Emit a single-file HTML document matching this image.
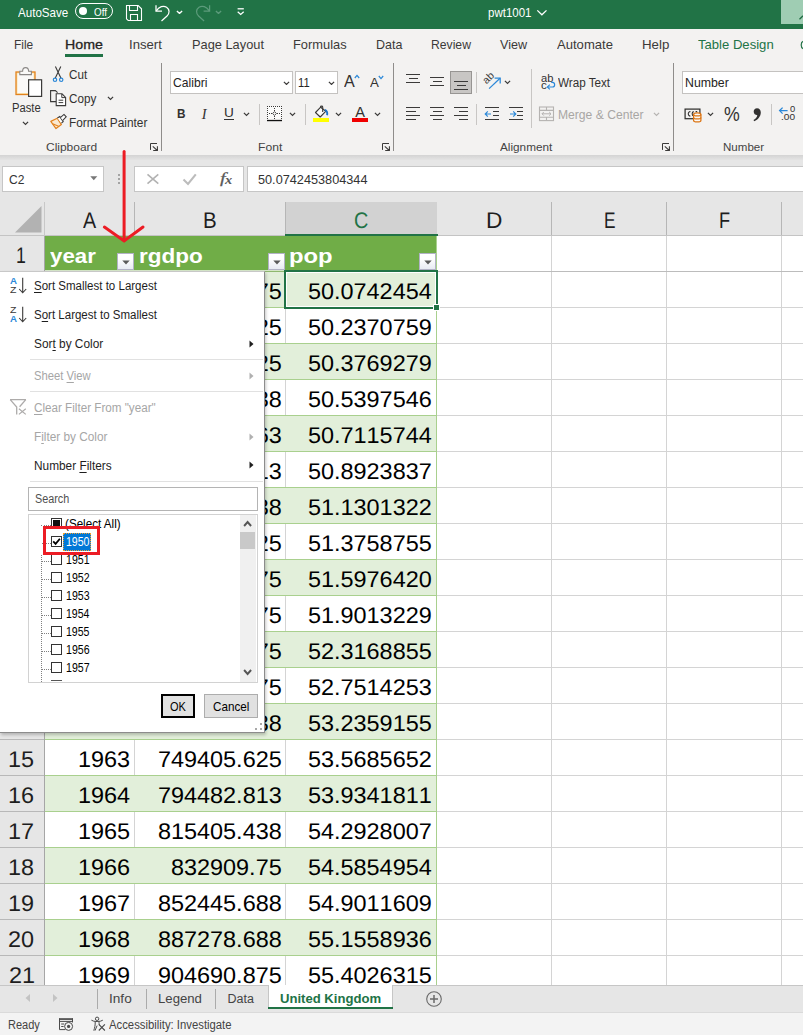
<!DOCTYPE html>
<html><head><meta charset="utf-8"><title>pwt1001 - Excel</title>
<style>
html,body{margin:0;padding:0;}
body{width:803px;height:1035px;position:relative;overflow:hidden;background:#fff;font-family:"Liberation Sans",sans-serif;}
#root{position:absolute;left:0;top:0;width:803px;height:1035px;overflow:hidden;}
#root div,#root span,#root svg{position:absolute;box-sizing:border-box;}
.t{white-space:nowrap;line-height:1;transform-origin:0 50%;}
u{text-decoration:underline;text-underline-offset:1.5px;}
</style></head><body><div id="root">
<div style="left:0px;top:0px;width:803px;height:29px;background:#217346;"></div>
<div style="left:781px;top:0px;width:22px;height:24px;background:#9fcdb3;"></div>
<div style="left:0px;top:29px;width:803px;height:126px;background:#f3f2f1;"></div>
<div style="left:0px;top:155px;width:803px;height:5px;background:linear-gradient(#d3d3d3,#e4e4e4);"></div>
<div style="left:0px;top:160px;width:803px;height:42px;background:#e6e6e6;"></div>
<div style="left:0px;top:202px;width:803px;height:783px;background:#fff;"></div>
<div style="left:0px;top:202px;width:803px;height:34px;background:#e6e6e6;"></div>
<div style="left:0px;top:236px;width:45px;height:749px;background:#e6e6e6;"></div>
<div style="left:134px;top:202px;width:1px;height:34px;background:#b6b6b6;"></div>
<div style="left:285px;top:202px;width:1px;height:34px;background:#b6b6b6;"></div>
<div style="left:436px;top:202px;width:1px;height:34px;background:#b6b6b6;"></div>
<div style="left:551px;top:202px;width:1px;height:34px;background:#b6b6b6;"></div>
<div style="left:666px;top:202px;width:1px;height:34px;background:#b6b6b6;"></div>
<div style="left:781px;top:202px;width:1px;height:34px;background:#b6b6b6;"></div>
<div style="left:0px;top:235px;width:803px;height:1px;background:#c4c4c4;"></div>
<div style="left:44px;top:236px;width:1px;height:749px;background:#a6a6a6;"></div>
<div style="left:286px;top:202px;width:151px;height:33px;background:#d2d2d2;"></div>
<div style="left:285px;top:234px;width:153px;height:2px;background:#217346;"></div>
<svg style="left:10px;top:203px;" width="34" height="32" viewBox="0 0 34 32"><path d="M31.5 3 L31.5 29.5 L5 29.5 Z" fill="#b2b2b2"/></svg>
<div style="left:44px;top:202px;width:1px;height:34px;background:#c8c8c8;"></div>
<div style="left:551px;top:236px;width:1px;height:749px;background:#d4d4d4;"></div>
<div style="left:666px;top:236px;width:1px;height:749px;background:#d4d4d4;"></div>
<div style="left:781px;top:236px;width:1px;height:749px;background:#d4d4d4;"></div>
<div style="left:437px;top:271px;width:366px;height:1px;background:#bcbcbc;"></div>
<div style="left:0px;top:271px;width:44px;height:1px;background:#b8b8b8;"></div>
<div style="left:437px;top:307px;width:366px;height:1px;background:#d4d4d4;"></div>
<div style="left:0px;top:307px;width:44px;height:1px;background:#b8b8b8;"></div>
<div style="left:437px;top:343px;width:366px;height:1px;background:#d4d4d4;"></div>
<div style="left:0px;top:343px;width:44px;height:1px;background:#b8b8b8;"></div>
<div style="left:437px;top:379px;width:366px;height:1px;background:#d4d4d4;"></div>
<div style="left:0px;top:379px;width:44px;height:1px;background:#b8b8b8;"></div>
<div style="left:437px;top:415px;width:366px;height:1px;background:#d4d4d4;"></div>
<div style="left:0px;top:415px;width:44px;height:1px;background:#b8b8b8;"></div>
<div style="left:437px;top:451px;width:366px;height:1px;background:#d4d4d4;"></div>
<div style="left:0px;top:451px;width:44px;height:1px;background:#b8b8b8;"></div>
<div style="left:437px;top:487px;width:366px;height:1px;background:#d4d4d4;"></div>
<div style="left:0px;top:487px;width:44px;height:1px;background:#b8b8b8;"></div>
<div style="left:437px;top:523px;width:366px;height:1px;background:#d4d4d4;"></div>
<div style="left:0px;top:523px;width:44px;height:1px;background:#b8b8b8;"></div>
<div style="left:437px;top:559px;width:366px;height:1px;background:#d4d4d4;"></div>
<div style="left:0px;top:559px;width:44px;height:1px;background:#b8b8b8;"></div>
<div style="left:437px;top:595px;width:366px;height:1px;background:#d4d4d4;"></div>
<div style="left:0px;top:595px;width:44px;height:1px;background:#b8b8b8;"></div>
<div style="left:437px;top:631px;width:366px;height:1px;background:#d4d4d4;"></div>
<div style="left:0px;top:631px;width:44px;height:1px;background:#b8b8b8;"></div>
<div style="left:437px;top:667px;width:366px;height:1px;background:#d4d4d4;"></div>
<div style="left:0px;top:667px;width:44px;height:1px;background:#b8b8b8;"></div>
<div style="left:437px;top:703px;width:366px;height:1px;background:#d4d4d4;"></div>
<div style="left:0px;top:703px;width:44px;height:1px;background:#b8b8b8;"></div>
<div style="left:437px;top:739px;width:366px;height:1px;background:#d4d4d4;"></div>
<div style="left:0px;top:739px;width:44px;height:1px;background:#b8b8b8;"></div>
<div style="left:437px;top:775px;width:366px;height:1px;background:#d4d4d4;"></div>
<div style="left:0px;top:775px;width:44px;height:1px;background:#b8b8b8;"></div>
<div style="left:437px;top:811px;width:366px;height:1px;background:#d4d4d4;"></div>
<div style="left:0px;top:811px;width:44px;height:1px;background:#b8b8b8;"></div>
<div style="left:437px;top:847px;width:366px;height:1px;background:#d4d4d4;"></div>
<div style="left:0px;top:847px;width:44px;height:1px;background:#b8b8b8;"></div>
<div style="left:437px;top:883px;width:366px;height:1px;background:#d4d4d4;"></div>
<div style="left:0px;top:883px;width:44px;height:1px;background:#b8b8b8;"></div>
<div style="left:437px;top:919px;width:366px;height:1px;background:#d4d4d4;"></div>
<div style="left:0px;top:919px;width:44px;height:1px;background:#b8b8b8;"></div>
<div style="left:437px;top:955px;width:366px;height:1px;background:#d4d4d4;"></div>
<div style="left:0px;top:955px;width:44px;height:1px;background:#b8b8b8;"></div>
<div style="left:437px;top:991px;width:366px;height:1px;background:#d4d4d4;"></div>
<div style="left:0px;top:991px;width:44px;height:1px;background:#b8b8b8;"></div>
<div style="left:45px;top:236px;width:392px;height:34px;background:#70ad47;"></div>
<div style="left:45px;top:270px;width:392px;height:1px;background:#d5e6c8;"></div>
<div style="left:45px;top:272px;width:392px;height:35px;background:#e2efda;"></div>
<div style="left:45px;top:271px;width:392px;height:1px;background:#a9d08e;"></div>
<div style="left:134px;top:308px;width:1px;height:35px;background:#d4d4d4;"></div>
<div style="left:285px;top:308px;width:1px;height:35px;background:#d4d4d4;"></div>
<div style="left:45px;top:307px;width:392px;height:1px;background:#a9d08e;"></div>
<div style="left:45px;top:344px;width:392px;height:35px;background:#e2efda;"></div>
<div style="left:45px;top:343px;width:392px;height:1px;background:#a9d08e;"></div>
<div style="left:134px;top:380px;width:1px;height:35px;background:#d4d4d4;"></div>
<div style="left:285px;top:380px;width:1px;height:35px;background:#d4d4d4;"></div>
<div style="left:45px;top:379px;width:392px;height:1px;background:#a9d08e;"></div>
<div style="left:45px;top:416px;width:392px;height:35px;background:#e2efda;"></div>
<div style="left:45px;top:415px;width:392px;height:1px;background:#a9d08e;"></div>
<div style="left:134px;top:452px;width:1px;height:35px;background:#d4d4d4;"></div>
<div style="left:285px;top:452px;width:1px;height:35px;background:#d4d4d4;"></div>
<div style="left:45px;top:451px;width:392px;height:1px;background:#a9d08e;"></div>
<div style="left:45px;top:488px;width:392px;height:35px;background:#e2efda;"></div>
<div style="left:45px;top:487px;width:392px;height:1px;background:#a9d08e;"></div>
<div style="left:134px;top:524px;width:1px;height:35px;background:#d4d4d4;"></div>
<div style="left:285px;top:524px;width:1px;height:35px;background:#d4d4d4;"></div>
<div style="left:45px;top:523px;width:392px;height:1px;background:#a9d08e;"></div>
<div style="left:45px;top:560px;width:392px;height:35px;background:#e2efda;"></div>
<div style="left:45px;top:559px;width:392px;height:1px;background:#a9d08e;"></div>
<div style="left:134px;top:596px;width:1px;height:35px;background:#d4d4d4;"></div>
<div style="left:285px;top:596px;width:1px;height:35px;background:#d4d4d4;"></div>
<div style="left:45px;top:595px;width:392px;height:1px;background:#a9d08e;"></div>
<div style="left:45px;top:632px;width:392px;height:35px;background:#e2efda;"></div>
<div style="left:45px;top:631px;width:392px;height:1px;background:#a9d08e;"></div>
<div style="left:134px;top:668px;width:1px;height:35px;background:#d4d4d4;"></div>
<div style="left:285px;top:668px;width:1px;height:35px;background:#d4d4d4;"></div>
<div style="left:45px;top:667px;width:392px;height:1px;background:#a9d08e;"></div>
<div style="left:45px;top:704px;width:392px;height:35px;background:#e2efda;"></div>
<div style="left:45px;top:703px;width:392px;height:1px;background:#a9d08e;"></div>
<div style="left:134px;top:740px;width:1px;height:35px;background:#d4d4d4;"></div>
<div style="left:285px;top:740px;width:1px;height:35px;background:#d4d4d4;"></div>
<div style="left:45px;top:739px;width:392px;height:1px;background:#a9d08e;"></div>
<div style="left:45px;top:776px;width:392px;height:35px;background:#e2efda;"></div>
<div style="left:45px;top:775px;width:392px;height:1px;background:#a9d08e;"></div>
<div style="left:134px;top:812px;width:1px;height:35px;background:#d4d4d4;"></div>
<div style="left:285px;top:812px;width:1px;height:35px;background:#d4d4d4;"></div>
<div style="left:45px;top:811px;width:392px;height:1px;background:#a9d08e;"></div>
<div style="left:45px;top:848px;width:392px;height:35px;background:#e2efda;"></div>
<div style="left:45px;top:847px;width:392px;height:1px;background:#a9d08e;"></div>
<div style="left:134px;top:884px;width:1px;height:35px;background:#d4d4d4;"></div>
<div style="left:285px;top:884px;width:1px;height:35px;background:#d4d4d4;"></div>
<div style="left:45px;top:883px;width:392px;height:1px;background:#a9d08e;"></div>
<div style="left:45px;top:920px;width:392px;height:35px;background:#e2efda;"></div>
<div style="left:45px;top:919px;width:392px;height:1px;background:#a9d08e;"></div>
<div style="left:134px;top:956px;width:1px;height:35px;background:#d4d4d4;"></div>
<div style="left:285px;top:956px;width:1px;height:35px;background:#d4d4d4;"></div>
<div style="left:45px;top:955px;width:392px;height:1px;background:#a9d08e;"></div>
<div style="left:436px;top:236px;width:1px;height:749px;background:#a9d08e;"></div>
<div style="left:45px;top:271px;width:392px;height:1px;background:#8eb86f;"></div>
<span class="t" style="left:83.40px;top:208.95px;font-size:22.7px;color:#1e1e1e;transform:scaleX(0.8679);text-rendering:geometricPrecision;">A</span>
<span class="t" style="left:203.46px;top:208.95px;font-size:22.7px;color:#1e1e1e;transform:scaleX(0.9055);text-rendering:geometricPrecision;">B</span>
<span class="t" style="left:353.91px;top:208.95px;font-size:22.7px;color:#217346;transform:scaleX(0.8741);text-rendering:geometricPrecision;">C</span>
<span class="t" style="left:485.89px;top:208.95px;font-size:22.7px;color:#1e1e1e;text-rendering:geometricPrecision;">D</span>
<span class="t" style="left:603.52px;top:208.95px;font-size:22.7px;color:#1e1e1e;transform:scaleX(0.7609);text-rendering:geometricPrecision;">E</span>
<span class="t" style="left:718.65px;top:208.95px;font-size:22.7px;color:#1e1e1e;transform:scaleX(0.8001);text-rendering:geometricPrecision;">F</span>
<span class="t" style="left:16.36px;top:244.35px;font-size:22.7px;color:#1e1e1e;transform:scaleX(0.7809);text-rendering:geometricPrecision;">1</span>
<span class="t" style="left:8.23px;top:748.35px;font-size:22.7px;color:#1e1e1e;transform:scaleX(1.0319);text-rendering:geometricPrecision;">15</span>
<span class="t" style="left:8.35px;top:784.35px;font-size:22.7px;color:#1e1e1e;transform:scaleX(1.0319);text-rendering:geometricPrecision;">16</span>
<span class="t" style="left:8.35px;top:820.35px;font-size:22.7px;color:#1e1e1e;transform:scaleX(1.0319);text-rendering:geometricPrecision;">17</span>
<span class="t" style="left:8.23px;top:856.35px;font-size:22.7px;color:#1e1e1e;transform:scaleX(1.0319);text-rendering:geometricPrecision;">18</span>
<span class="t" style="left:8.35px;top:892.35px;font-size:22.7px;color:#1e1e1e;transform:scaleX(1.0319);text-rendering:geometricPrecision;">19</span>
<span class="t" style="left:8.47px;top:928.35px;font-size:22.7px;color:#1e1e1e;transform:scaleX(1.0319);text-rendering:geometricPrecision;">20</span>
<span class="t" style="left:8.58px;top:964.35px;font-size:22.7px;color:#1e1e1e;transform:scaleX(1.0319);text-rendering:geometricPrecision;">21</span>
<span class="t" style="left:49.78px;top:246.35px;font-size:20.5px;color:#fff;font-weight:bold;transform:scaleX(1.0856);">year</span>
<span class="t" style="left:138.65px;top:246.35px;font-size:20.5px;color:#fff;font-weight:bold;transform:scaleX(1.0989);">rgdpo</span>
<span class="t" style="left:289.07px;top:246.35px;font-size:20.5px;color:#fff;font-weight:bold;transform:scaleX(1.1617);">pop</span>
<div style="left:117px;top:253px;width:17px;height:17px;background:linear-gradient(#ffffff 30%,#e8ebf3);border:1px solid #b2b2c6;"></div>
<svg style="left:121.5px;top:259.5px;" width="8" height="5" viewBox="0 0 8 5"><path d="M0.3 0.4 L7.7 0.4 L4 4.6 Z" fill="#5a5a5a"/></svg>
<div style="left:268px;top:253px;width:17px;height:17px;background:linear-gradient(#ffffff 30%,#e8ebf3);border:1px solid #b2b2c6;"></div>
<svg style="left:272.5px;top:259.5px;" width="8" height="5" viewBox="0 0 8 5"><path d="M0.3 0.4 L7.7 0.4 L4 4.6 Z" fill="#5a5a5a"/></svg>
<div style="left:419px;top:253px;width:17px;height:17px;background:linear-gradient(#ffffff 30%,#e8ebf3);border:1px solid #b2b2c6;"></div>
<svg style="left:423.5px;top:259.5px;" width="8" height="5" viewBox="0 0 8 5"><path d="M0.3 0.4 L7.7 0.4 L4 4.6 Z" fill="#5a5a5a"/></svg>
<span class="t" style="left:308.16px;top:280.15px;font-size:22.7px;color:#000;font-kerning:none;transform:scaleX(1.0319);text-rendering:geometricPrecision;">50.0742454</span>
<span class="t" style="left:157.76px;top:280.15px;font-size:22.7px;color:#000;font-kerning:none;transform:scaleX(1.0319);text-rendering:geometricPrecision;">123456.875</span>
<span class="t" style="left:78.20px;top:280.15px;font-size:22.7px;color:#000;font-kerning:none;transform:scaleX(1.0319);text-rendering:geometricPrecision;">1950</span>
<span class="t" style="left:308.16px;top:316.15px;font-size:22.7px;color:#000;font-kerning:none;transform:scaleX(1.0319);text-rendering:geometricPrecision;">50.2370759</span>
<span class="t" style="left:157.76px;top:316.15px;font-size:22.7px;color:#000;font-kerning:none;transform:scaleX(1.0319);text-rendering:geometricPrecision;">123456.625</span>
<span class="t" style="left:78.20px;top:316.15px;font-size:22.7px;color:#000;font-kerning:none;transform:scaleX(1.0319);text-rendering:geometricPrecision;">1951</span>
<span class="t" style="left:308.16px;top:352.15px;font-size:22.7px;color:#000;font-kerning:none;transform:scaleX(1.0319);text-rendering:geometricPrecision;">50.3769279</span>
<span class="t" style="left:157.76px;top:352.15px;font-size:22.7px;color:#000;font-kerning:none;transform:scaleX(1.0319);text-rendering:geometricPrecision;">123456.125</span>
<span class="t" style="left:78.20px;top:352.15px;font-size:22.7px;color:#000;font-kerning:none;transform:scaleX(1.0319);text-rendering:geometricPrecision;">1952</span>
<span class="t" style="left:308.16px;top:388.15px;font-size:22.7px;color:#000;font-kerning:none;transform:scaleX(1.0319);text-rendering:geometricPrecision;">50.5397546</span>
<span class="t" style="left:157.76px;top:388.15px;font-size:22.7px;color:#000;font-kerning:none;transform:scaleX(1.0319);text-rendering:geometricPrecision;">123456.438</span>
<span class="t" style="left:78.20px;top:388.15px;font-size:22.7px;color:#000;font-kerning:none;transform:scaleX(1.0319);text-rendering:geometricPrecision;">1953</span>
<span class="t" style="left:308.16px;top:424.15px;font-size:22.7px;color:#000;font-kerning:none;transform:scaleX(1.0319);text-rendering:geometricPrecision;">50.7115744</span>
<span class="t" style="left:157.76px;top:424.15px;font-size:22.7px;color:#000;font-kerning:none;transform:scaleX(1.0319);text-rendering:geometricPrecision;">123456.563</span>
<span class="t" style="left:78.20px;top:424.15px;font-size:22.7px;color:#000;font-kerning:none;transform:scaleX(1.0319);text-rendering:geometricPrecision;">1954</span>
<span class="t" style="left:308.16px;top:460.15px;font-size:22.7px;color:#000;font-kerning:none;transform:scaleX(1.0319);text-rendering:geometricPrecision;">50.8923837</span>
<span class="t" style="left:157.76px;top:460.15px;font-size:22.7px;color:#000;font-kerning:none;transform:scaleX(1.0319);text-rendering:geometricPrecision;">123456.813</span>
<span class="t" style="left:78.20px;top:460.15px;font-size:22.7px;color:#000;font-kerning:none;transform:scaleX(1.0319);text-rendering:geometricPrecision;">1955</span>
<span class="t" style="left:308.16px;top:496.15px;font-size:22.7px;color:#000;font-kerning:none;transform:scaleX(1.0319);text-rendering:geometricPrecision;">51.1301322</span>
<span class="t" style="left:157.76px;top:496.15px;font-size:22.7px;color:#000;font-kerning:none;transform:scaleX(1.0319);text-rendering:geometricPrecision;">123456.938</span>
<span class="t" style="left:78.20px;top:496.15px;font-size:22.7px;color:#000;font-kerning:none;transform:scaleX(1.0319);text-rendering:geometricPrecision;">1956</span>
<span class="t" style="left:308.16px;top:532.15px;font-size:22.7px;color:#000;font-kerning:none;transform:scaleX(1.0319);text-rendering:geometricPrecision;">51.3758755</span>
<span class="t" style="left:157.76px;top:532.15px;font-size:22.7px;color:#000;font-kerning:none;transform:scaleX(1.0319);text-rendering:geometricPrecision;">123456.125</span>
<span class="t" style="left:78.20px;top:532.15px;font-size:22.7px;color:#000;font-kerning:none;transform:scaleX(1.0319);text-rendering:geometricPrecision;">1957</span>
<span class="t" style="left:308.16px;top:568.15px;font-size:22.7px;color:#000;font-kerning:none;transform:scaleX(1.0319);text-rendering:geometricPrecision;">51.5976420</span>
<span class="t" style="left:157.76px;top:568.15px;font-size:22.7px;color:#000;font-kerning:none;transform:scaleX(1.0319);text-rendering:geometricPrecision;">123456.375</span>
<span class="t" style="left:78.20px;top:568.15px;font-size:22.7px;color:#000;font-kerning:none;transform:scaleX(1.0319);text-rendering:geometricPrecision;">1958</span>
<span class="t" style="left:308.16px;top:604.15px;font-size:22.7px;color:#000;font-kerning:none;transform:scaleX(1.0319);text-rendering:geometricPrecision;">51.9013229</span>
<span class="t" style="left:157.76px;top:604.15px;font-size:22.7px;color:#000;font-kerning:none;transform:scaleX(1.0319);text-rendering:geometricPrecision;">123456.875</span>
<span class="t" style="left:78.20px;top:604.15px;font-size:22.7px;color:#000;font-kerning:none;transform:scaleX(1.0319);text-rendering:geometricPrecision;">1959</span>
<span class="t" style="left:308.16px;top:640.15px;font-size:22.7px;color:#000;font-kerning:none;transform:scaleX(1.0319);text-rendering:geometricPrecision;">52.3168855</span>
<span class="t" style="left:157.76px;top:640.15px;font-size:22.7px;color:#000;font-kerning:none;transform:scaleX(1.0319);text-rendering:geometricPrecision;">123456.375</span>
<span class="t" style="left:78.20px;top:640.15px;font-size:22.7px;color:#000;font-kerning:none;transform:scaleX(1.0319);text-rendering:geometricPrecision;">1960</span>
<span class="t" style="left:308.16px;top:676.15px;font-size:22.7px;color:#000;font-kerning:none;transform:scaleX(1.0319);text-rendering:geometricPrecision;">52.7514253</span>
<span class="t" style="left:157.76px;top:676.15px;font-size:22.7px;color:#000;font-kerning:none;transform:scaleX(1.0319);text-rendering:geometricPrecision;">123456.875</span>
<span class="t" style="left:78.20px;top:676.15px;font-size:22.7px;color:#000;font-kerning:none;transform:scaleX(1.0319);text-rendering:geometricPrecision;">1961</span>
<span class="t" style="left:308.16px;top:712.15px;font-size:22.7px;color:#000;font-kerning:none;transform:scaleX(1.0319);text-rendering:geometricPrecision;">53.2359155</span>
<span class="t" style="left:157.76px;top:712.15px;font-size:22.7px;color:#000;font-kerning:none;transform:scaleX(1.0319);text-rendering:geometricPrecision;">123456.938</span>
<span class="t" style="left:78.20px;top:712.15px;font-size:22.7px;color:#000;font-kerning:none;transform:scaleX(1.0319);text-rendering:geometricPrecision;">1962</span>
<span class="t" style="left:308.16px;top:748.15px;font-size:22.7px;color:#000;font-kerning:none;transform:scaleX(1.0319);text-rendering:geometricPrecision;">53.5685652</span>
<span class="t" style="left:157.76px;top:748.15px;font-size:22.7px;color:#000;font-kerning:none;transform:scaleX(1.0319);text-rendering:geometricPrecision;">749405.625</span>
<span class="t" style="left:78.20px;top:748.15px;font-size:22.7px;color:#000;font-kerning:none;transform:scaleX(1.0319);text-rendering:geometricPrecision;">1963</span>
<span class="t" style="left:308.16px;top:784.15px;font-size:22.7px;color:#000;font-kerning:none;transform:scaleX(1.0319);text-rendering:geometricPrecision;">53.9341811</span>
<span class="t" style="left:157.76px;top:784.15px;font-size:22.7px;color:#000;font-kerning:none;transform:scaleX(1.0319);text-rendering:geometricPrecision;">794482.813</span>
<span class="t" style="left:78.20px;top:784.15px;font-size:22.7px;color:#000;font-kerning:none;transform:scaleX(1.0319);text-rendering:geometricPrecision;">1964</span>
<span class="t" style="left:308.16px;top:820.15px;font-size:22.7px;color:#000;font-kerning:none;transform:scaleX(1.0319);text-rendering:geometricPrecision;">54.2928007</span>
<span class="t" style="left:157.76px;top:820.15px;font-size:22.7px;color:#000;font-kerning:none;transform:scaleX(1.0319);text-rendering:geometricPrecision;">815405.438</span>
<span class="t" style="left:78.20px;top:820.15px;font-size:22.7px;color:#000;font-kerning:none;transform:scaleX(1.0319);text-rendering:geometricPrecision;">1965</span>
<span class="t" style="left:308.16px;top:856.15px;font-size:22.7px;color:#000;font-kerning:none;transform:scaleX(1.0319);text-rendering:geometricPrecision;">54.5854954</span>
<span class="t" style="left:170.79px;top:856.15px;font-size:22.7px;color:#000;font-kerning:none;transform:scaleX(1.0319);text-rendering:geometricPrecision;">832909.75</span>
<span class="t" style="left:78.20px;top:856.15px;font-size:22.7px;color:#000;font-kerning:none;transform:scaleX(1.0319);text-rendering:geometricPrecision;">1966</span>
<span class="t" style="left:308.16px;top:892.15px;font-size:22.7px;color:#000;font-kerning:none;transform:scaleX(1.0319);text-rendering:geometricPrecision;">54.9011609</span>
<span class="t" style="left:157.76px;top:892.15px;font-size:22.7px;color:#000;font-kerning:none;transform:scaleX(1.0319);text-rendering:geometricPrecision;">852445.688</span>
<span class="t" style="left:78.20px;top:892.15px;font-size:22.7px;color:#000;font-kerning:none;transform:scaleX(1.0319);text-rendering:geometricPrecision;">1967</span>
<span class="t" style="left:308.16px;top:928.15px;font-size:22.7px;color:#000;font-kerning:none;transform:scaleX(1.0319);text-rendering:geometricPrecision;">55.1558936</span>
<span class="t" style="left:157.76px;top:928.15px;font-size:22.7px;color:#000;font-kerning:none;transform:scaleX(1.0319);text-rendering:geometricPrecision;">887278.688</span>
<span class="t" style="left:78.20px;top:928.15px;font-size:22.7px;color:#000;font-kerning:none;transform:scaleX(1.0319);text-rendering:geometricPrecision;">1968</span>
<span class="t" style="left:308.16px;top:964.15px;font-size:22.7px;color:#000;font-kerning:none;transform:scaleX(1.0319);text-rendering:geometricPrecision;">55.4026315</span>
<span class="t" style="left:157.76px;top:964.15px;font-size:22.7px;color:#000;font-kerning:none;transform:scaleX(1.0319);text-rendering:geometricPrecision;">904690.875</span>
<span class="t" style="left:78.20px;top:964.15px;font-size:22.7px;color:#000;font-kerning:none;transform:scaleX(1.0319);text-rendering:geometricPrecision;">1969</span>
<div style="left:284px;top:270px;width:154px;height:39px;border:2px solid #217346;box-shadow:inset 0 0 0 1px #fff;"></div>
<div style="left:433px;top:304px;width:7px;height:7px;background:#217346;border:1px solid #fff;"></div>
<div style="left:0px;top:985px;width:803px;height:28px;background:#e6e6e6;"></div>
<div style="left:0px;top:985px;width:803px;height:1px;background:#c6c6c6;"></div>
<div style="left:0px;top:1013px;width:803px;height:22px;background:#f3f3f3;"></div>
<div style="left:0px;top:1012px;width:803px;height:1px;background:#dadada;"></div>
<div style="left:97px;top:989px;width:1px;height:20px;background:#ababab;"></div>
<div style="left:146px;top:989px;width:1px;height:20px;background:#ababab;"></div>
<div style="left:215px;top:989px;width:1px;height:20px;background:#ababab;"></div>
<div style="left:268px;top:985px;width:125px;height:24px;background:#fff;border-left:1px solid #c6c6c6;border-right:1px solid #c6c6c6;"></div>
<div style="left:268px;top:1007px;width:125px;height:2px;background:#217346;"></div>
<span class="t" style="left:108.77px;top:993.15px;font-size:12.5px;color:#444;transform:scaleX(1.0909);">Info</span>
<span class="t" style="left:158.45px;top:993.15px;font-size:12.5px;color:#444;transform:scaleX(1.0533);">Legend</span>
<span class="t" style="left:227.50px;top:993.15px;font-size:12.5px;color:#444;">Data</span>
<span class="t" style="left:279.71px;top:993.15px;font-size:12.5px;color:#217346;font-weight:bold;transform:scaleX(1.0474);">United Kingdom</span>
<svg style="left:22px;top:993px;" width="40" height="10" viewBox="0 0 40 10"><path d="M8 1 L3.5 5 L8 9 Z" fill="#c3c3c3"/><path d="M31 1 L35.5 5 L31 9 Z" fill="#c3c3c3"/></svg>
<svg style="left:425px;top:990px;" width="18" height="18" viewBox="0 0 18 18"><circle cx="9" cy="9" r="7.3" fill="none" stroke="#6a6a6a" stroke-width="1.1"/><path d="M9 5 V13 M5 9 H13" stroke="#6a6a6a" stroke-width="1.5"/></svg>
<span class="t" style="left:8.12px;top:1019.40px;font-size:12px;color:#444;transform:scaleX(0.9193);">Ready</span>
<span class="t" style="left:108.50px;top:1019.40px;font-size:12px;color:#444;transform:scaleX(0.9422);">Accessibility: Investigate</span>
<svg style="left:100px;top:148px;" width="48" height="98" viewBox="0 0 48 98"><path d="M24.1 3.4 V92.5" stroke="#ec1c24" stroke-width="3" fill="none" stroke-linecap="round"/><path d="M4.4 79 L24.1 93 L43 79" stroke="#ec1c24" stroke-width="3" fill="none" stroke-linecap="round" stroke-linejoin="miter"/></svg>
<div style="left:0px;top:271px;width:265px;height:462px;background:#fff;border-right:1px solid #8c8c8c;border-bottom:1px solid #8c8c8c;border-top:1px solid #c8c8c8;box-shadow:1px 2px 3px rgba(0,0,0,.22);"></div>
<span class="t" style="left:33.82px;top:280.25px;font-size:12.3px;color:#1e1e1e;transform:scaleX(0.9364);"><u>S</u>ort Smallest to Largest</span>
<span class="t" style="left:33.82px;top:309.25px;font-size:12.3px;color:#1e1e1e;transform:scaleX(0.9364);">S<u>o</u>rt Largest to Smallest</span>
<span class="t" style="left:33.81px;top:338.35px;font-size:12.3px;color:#1e1e1e;transform:scaleX(0.9638);">Sor<u>t</u> by Color</span>
<svg style="left:249px;top:339.6px;" width="5" height="8" viewBox="0 0 5 8"><path d="M0.5 0.5 L4.5 4 L0.5 7.5 Z" fill="#1e1e1e"/></svg>
<div style="left:30px;top:359px;width:233px;height:1px;background:#e1e1e1;"></div>
<span class="t" style="left:33.84px;top:370.35px;font-size:12.3px;color:#a6a6a6;transform:scaleX(0.9154);">Sheet <u>V</u>iew</span>
<svg style="left:249px;top:371.6px;" width="5" height="8" viewBox="0 0 5 8"><path d="M0.5 0.5 L4.5 4 L0.5 7.5 Z" fill="#b0b0b0"/></svg>
<div style="left:30px;top:391px;width:233px;height:1px;background:#e1e1e1;"></div>
<span class="t" style="left:33.82px;top:402.25px;font-size:12.3px;color:#a6a6a6;transform:scaleX(0.9482);"><u>C</u>lear Filter From "year"</span>
<span class="t" style="left:34.36px;top:431.35px;font-size:12.3px;color:#a6a6a6;transform:scaleX(0.9602);">F<u>i</u>lter by Color</span>
<svg style="left:249px;top:432.6px;" width="5" height="8" viewBox="0 0 5 8"><path d="M0.5 0.5 L4.5 4 L0.5 7.5 Z" fill="#b0b0b0"/></svg>
<span class="t" style="left:34.35px;top:460.15px;font-size:12.3px;color:#1e1e1e;transform:scaleX(0.9630);">Number <u>F</u>ilters</span>
<svg style="left:249px;top:461.4px;" width="5" height="8" viewBox="0 0 5 8"><path d="M0.5 0.5 L4.5 4 L0.5 7.5 Z" fill="#1e1e1e"/></svg>
<div style="left:30px;top:481px;width:233px;height:1px;background:#e1e1e1;"></div>
<span class="t" style="left:10.01px;top:277.10px;font-size:9px;color:#2b88d8;font-weight:bold;transform:scaleX(1.0784);">A</span>
<span class="t" style="left:10.08px;top:285.50px;font-size:9px;color:#3b3a39;transform:scaleX(1.1717);">Z</span>
<svg style="left:18px;top:276.5px;" width="10" height="17" viewBox="0 0 10 17"><path d="M4.7 0.7 V15.6 M1.2 12 L4.7 15.8 L8.2 12" stroke="#3b3a39" stroke-width="1.1" fill="none"/></svg>
<span class="t" style="left:10.08px;top:306.10px;font-size:9px;color:#3b3a39;transform:scaleX(1.1717);">Z</span>
<span class="t" style="left:10.01px;top:314.50px;font-size:9px;color:#2b88d8;font-weight:bold;transform:scaleX(1.0784);">A</span>
<svg style="left:18px;top:305.5px;" width="10" height="17" viewBox="0 0 10 17"><path d="M4.7 0.7 V15.6 M1.2 12 L4.7 15.8 L8.2 12" stroke="#3b3a39" stroke-width="1.1" fill="none"/></svg>
<svg style="left:9px;top:398px;" width="20" height="18" viewBox="0 0 20 18"><path d="M1 1.6 H17 M1.2 1.6 L7.7 9 V16.6 M16.8 1.6 L10.6 8.7" stroke="#adabaa" stroke-width="1.3" fill="none"/><path d="M9.9 10.7 L16.8 16.4 M16.8 10.7 L9.9 16.4" stroke="#adabaa" stroke-width="1.2"/></svg>
<div style="left:28px;top:487px;width:230px;height:24px;background:#fff;border:1px solid #b4b4b4;"></div>
<span class="t" style="left:34.76px;top:493.20px;font-size:12px;color:#505050;transform:scaleX(0.9016);">Search</span>
<div style="left:28px;top:514px;width:230px;height:169px;background:#fff;border:1px solid #d2d2d2;"></div>
<div style="left:240px;top:515px;width:16px;height:167px;background:#f0f0f0;"></div>
<div style="left:240px;top:532px;width:15px;height:17px;background:#c9c9c9;"></div>
<svg style="left:243px;top:520px;" width="9" height="7" viewBox="0 0 9 7"><path d="M1.1 6 L4.6 2 L8.1 6" stroke="#555" stroke-width="1.9" fill="none"/></svg>
<svg style="left:243px;top:669px;" width="9" height="7" viewBox="0 0 9 7"><path d="M1.1 1 L4.6 5 L8.1 1" stroke="#555" stroke-width="1.9" fill="none"/></svg>
<div style="left:41px;top:525px;width:1px;height:157px;border-left:1px dotted #808080;"></div>
<div style="left:44px;top:525px;width:7px;height:1px;border-top:1px dotted #808080;"></div>
<div style="left:51px;top:518px;width:11px;height:11px;background:#fff;border:1px solid #333;"></div>
<div style="left:53px;top:520px;width:7px;height:7px;background:#111;"></div>
<span class="t" style="left:65.30px;top:518.00px;font-size:12.6px;color:#000;transform:scaleX(0.9248);">(Select All)</span>
<div style="left:42px;top:543px;width:9px;height:1px;border-top:1px dotted #808080;"></div>
<div style="left:51px;top:536px;width:11px;height:11px;background:#fff;border:1px solid #333;"></div>
<div style="left:63px;top:533px;width:28px;height:18px;background:#0078d7;outline:1px dotted #f0a030;outline-offset:-1px;"></div>
<svg style="left:52px;top:537px;" width="9" height="9" viewBox="0 0 9 9"><path d="M1.2 4.4 L3.6 6.9 L7.9 1.7" stroke="#000" stroke-width="1.8" fill="none"/></svg>
<span class="t" style="left:66.06px;top:536.00px;font-size:12.6px;color:#fff;transform:scaleX(0.8386);">1950</span>
<div style="left:42px;top:561px;width:9px;height:1px;border-top:1px dotted #808080;"></div>
<div style="left:51px;top:554px;width:11px;height:11px;background:#fff;border:1px solid #333;"></div>
<span class="t" style="left:66.06px;top:554.00px;font-size:12.6px;color:#000;transform:scaleX(0.8425);">1951</span>
<div style="left:42px;top:579px;width:9px;height:1px;border-top:1px dotted #808080;"></div>
<div style="left:51px;top:572px;width:11px;height:11px;background:#fff;border:1px solid #333;"></div>
<span class="t" style="left:66.06px;top:572.00px;font-size:12.6px;color:#000;transform:scaleX(0.8425);">1952</span>
<div style="left:42px;top:597px;width:9px;height:1px;border-top:1px dotted #808080;"></div>
<div style="left:51px;top:590px;width:11px;height:11px;background:#fff;border:1px solid #333;"></div>
<span class="t" style="left:66.06px;top:590.00px;font-size:12.6px;color:#000;transform:scaleX(0.8425);">1953</span>
<div style="left:42px;top:615px;width:9px;height:1px;border-top:1px dotted #808080;"></div>
<div style="left:51px;top:608px;width:11px;height:11px;background:#fff;border:1px solid #333;"></div>
<span class="t" style="left:66.06px;top:608.00px;font-size:12.6px;color:#000;transform:scaleX(0.8346);">1954</span>
<div style="left:42px;top:633px;width:9px;height:1px;border-top:1px dotted #808080;"></div>
<div style="left:51px;top:626px;width:11px;height:11px;background:#fff;border:1px solid #333;"></div>
<span class="t" style="left:66.06px;top:626.00px;font-size:12.6px;color:#000;transform:scaleX(0.8386);">1955</span>
<div style="left:42px;top:651px;width:9px;height:1px;border-top:1px dotted #808080;"></div>
<div style="left:51px;top:644px;width:11px;height:11px;background:#fff;border:1px solid #333;"></div>
<span class="t" style="left:66.06px;top:644.00px;font-size:12.6px;color:#000;transform:scaleX(0.8425);">1956</span>
<div style="left:42px;top:669px;width:9px;height:1px;border-top:1px dotted #808080;"></div>
<div style="left:51px;top:662px;width:11px;height:11px;background:#fff;border:1px solid #333;"></div>
<span class="t" style="left:66.06px;top:662.00px;font-size:12.6px;color:#000;transform:scaleX(0.8425);">1957</span>
<div style="left:51px;top:680px;width:11px;height:1px;background:#555;"></div>
<div style="left:41px;top:527px;width:1px;height:27px;background:#fff;"></div>
<div style="left:43px;top:526px;width:57px;height:28.5px;border:3px solid #ec1c24;"></div>
<div style="left:161px;top:694px;width:34px;height:24px;background:#e1e1e1;border:2px solid #000;"></div>
<span class="t" style="left:170.06px;top:700.90px;font-size:12.6px;color:#000;transform:scaleX(0.8736);">OK</span>
<div style="left:204px;top:694px;width:54px;height:24px;background:#e1e1e1;border:1px solid #adadad;"></div>
<span class="t" style="left:213.11px;top:700.90px;font-size:12.6px;color:#000;transform:scaleX(0.9286);">Cancel</span>
<div style="left:260px;top:723px;width:2px;height:2px;background:#a8a8a8;"></div>
<div style="left:255px;top:728px;width:2px;height:2px;background:#a8a8a8;"></div>
<div style="left:260px;top:728px;width:2px;height:2px;background:#a8a8a8;"></div>
<span class="t" style="left:18.20px;top:6.90px;font-size:12.2px;color:#fff;transform:scaleX(0.9515);">AutoSave</span>
<div style="left:75px;top:3px;width:38px;height:16px;border:1px solid #fff;border-radius:8px;"></div>
<div style="left:78.9px;top:7.3px;width:8px;height:8px;background:#fff;border-radius:50%;"></div>
<span class="t" style="left:93.61px;top:7.30px;font-size:10.6px;color:#fff;transform:scaleX(0.9287);">Off</span>
<svg style="left:125px;top:4px;" width="18" height="18" viewBox="0 0 18 18"><path d="M1.5 1.5 H13.2 L16.5 4.8 V16.5 H3.2 L1.5 14.8 Z" fill="none" stroke="#fff" stroke-width="1.1"/><path d="M4.5 1.5 V6.5 H12.5 V1.5 M5.5 16.5 V10.5 H12.5 V16.5" fill="none" stroke="#fff" stroke-width="1.1"/></svg>
<svg style="left:154px;top:3px;" width="18" height="19" viewBox="0 0 18 19"><path d="M2 2.2 V8.2 H8" fill="none" stroke="#fff" stroke-width="1.25"/><path d="M2.3 7.9 C5 3.5 9.5 2.2 12.6 4.2 C15.8 6.4 15.8 10.2 13 13 L7.5 18" fill="none" stroke="#fff" stroke-width="1.25"/></svg>
<svg style="left:194px;top:3px;" width="18" height="19" viewBox="0 0 18 19"><path d="M15.6 2.2 V8.2 H9.6" fill="none" stroke="#5c9b7b" stroke-width="1.25"/><path d="M15.3 7.9 C12.6 3.5 8.1 2.2 5 4.2 C1.8 6.4 1.8 10.2 4.6 13 L10.1 18" fill="none" stroke="#5c9b7b" stroke-width="1.25"/></svg>
<svg style="left:236px;top:7px;" width="10" height="9" viewBox="0 0 10 9"><path d="M1.6 1.8 H7.8" stroke="#fff" stroke-width="1.3"/><path d="M1.7 4.8 L4.7 7.5 L7.7 4.8" stroke="#fff" stroke-width="1.3" fill="none"/></svg>
<span class="t" style="left:487.71px;top:7.40px;font-size:12.2px;color:#fff;transform:scaleX(0.9425);">pwt1001</span>
<svg style="left:536px;top:9px;" width="12" height="8" viewBox="0 0 12 8"><path d="M1.3 1.4 L5.9 5.8 L10.5 1.4" stroke="#fff" stroke-width="1.3" fill="none"/></svg>
<svg style="left:799px;top:15px;" width="4" height="5" viewBox="0 0 4 5"><path d="M0.5 4.2 L4 0.8" stroke="#1d6a40" stroke-width="1.3" fill="none"/></svg>
<span class="t" style="left:13.64px;top:39.20px;font-size:12.6px;color:#3b3a39;transform:scaleX(0.9481);">File</span>
<span class="t" style="left:129.12px;top:39.20px;font-size:12.6px;color:#3b3a39;transform:scaleX(1.0417);">Insert</span>
<span class="t" style="left:192.27px;top:39.20px;font-size:12.6px;color:#3b3a39;transform:scaleX(1.0175);">Page Layout</span>
<span class="t" style="left:293.47px;top:39.20px;font-size:12.6px;color:#3b3a39;transform:scaleX(1.0204);">Formulas</span>
<span class="t" style="left:375.60px;top:39.20px;font-size:12.6px;color:#3b3a39;transform:scaleX(0.9921);">Data</span>
<span class="t" style="left:431.43px;top:39.20px;font-size:12.6px;color:#3b3a39;transform:scaleX(0.9667);">Review</span>
<span class="t" style="left:500.10px;top:39.20px;font-size:12.6px;color:#3b3a39;">View</span>
<span class="t" style="left:557.40px;top:39.20px;font-size:12.6px;color:#3b3a39;transform:scaleX(1.0376);">Automate</span>
<span class="t" style="left:642.14px;top:39.20px;font-size:12.6px;color:#3b3a39;transform:scaleX(1.0555);">Help</span>
<span class="t" style="left:64.66px;top:39.20px;font-size:12.6px;color:#252423;transform:scaleX(1.1280);-webkit-text-stroke:0.28px #252423;">Home</span>
<div style="left:65px;top:54px;width:38px;height:3px;background:#217346;"></div>
<span class="t" style="left:698.24px;top:39.20px;font-size:12.6px;color:#217346;transform:scaleX(1.0391);">Table Design</span>
<svg style="left:800px;top:38px;" width="3" height="14" viewBox="0 0 3 14"><path d="M3 3.4 C1.4 4.2 1.2 5.6 1.2 7 C1.2 8.4 1.4 9.8 3 10.6" stroke="#217346" stroke-width="1.2" fill="none"/></svg>
<div style="left:161px;top:63px;width:1.2px;height:88px;background:#8f8d8b;"></div>
<div style="left:393px;top:63px;width:1.2px;height:88px;background:#8f8d8b;"></div>
<div style="left:673px;top:63px;width:1.2px;height:88px;background:#8f8d8b;"></div>
<svg style="left:13px;top:65px;" width="31" height="33" viewBox="0 0 31 33"><rect x="3" y="7" width="19" height="22.5" fill="#fbe5b0" stroke="#e2821e" stroke-width="1.3"/>
<rect x="4.5" y="8.5" width="16" height="19.5" fill="#faf9f8"/>
<path d="M6.8 9.6 V6.3 H9.6 C9.6 3.9 10.8 2.6 12.6 2.6 C14.4 2.6 15.6 3.9 15.6 6.3 H18.4 V9.6 Z" fill="#faf9f8" stroke="#8a8886" stroke-width="1.1"/>
<rect x="15.6" y="14.8" width="13" height="16.6" fill="#fff" stroke="#3b3a39" stroke-width="1.2"/></svg>
<span class="t" style="left:11.90px;top:101.65px;font-size:12.3px;color:#323130;transform:scaleX(0.9134);">Paste</span>
<svg style="left:51px;top:65px;" width="14" height="19" viewBox="0 0 14 19"><path d="M4.4 1.5 L10 13.2 M9.8 1.5 L4.2 13.2" stroke="#3b3a39" stroke-width="1.1" fill="none"/><circle cx="4" cy="14.8" r="1.7" fill="none" stroke="#2b88d8" stroke-width="1.2"/><circle cx="10.2" cy="14.8" r="1.7" fill="none" stroke="#2b88d8" stroke-width="1.2"/></svg>
<span class="t" style="left:69.32px;top:69.25px;font-size:12.3px;color:#323130;transform:scaleX(0.9485);">Cut</span>
<svg style="left:49px;top:89px;" width="19" height="18" viewBox="0 0 19 18"><path d="M7.2 12.6 H1.6 V1.6 H6.4 L8.6 3.6" fill="none" stroke="#3b3a39" stroke-width="1.1"/><path d="M7.2 4.8 H13 L16.6 8.4 V16.6 H7.2 Z" fill="#fff" stroke="#3b3a39" stroke-width="1.1"/><path d="M12.8 5 V8.6 H16.4" fill="none" stroke="#3b3a39" stroke-width="1"/><path d="M9.6 11.2 H14.2 M9.6 13.6 H14.2" stroke="#3b3a39" stroke-width="1"/></svg>
<span class="t" style="left:69.32px;top:93.45px;font-size:12.3px;color:#323130;transform:scaleX(0.9485);">Copy</span>
<svg style="left:49px;top:113px;" width="19" height="17" viewBox="0 0 19 17"><path d="M1.8 8.4 L8.2 5.2 L12.4 11.6 L7 15.6 Z" fill="#fbe9d0" stroke="#e2821e" stroke-width="1.2" stroke-linejoin="round"/><path d="M3.6 10.8 L9.6 13.2" stroke="#e2821e" stroke-width="1.1"/><path d="M8.4 5 L10.8 3.6 L14.2 8.6 L12.4 10.2" fill="#fff" stroke="#3b3a39" stroke-width="1.1"/><path d="M11.6 4.4 L15 1.4 L17.2 3.8 L13.8 7.4" fill="#fff" stroke="#3b3a39" stroke-width="1.1"/></svg>
<span class="t" style="left:68.95px;top:117.25px;font-size:12.3px;color:#323130;transform:scaleX(0.9639);">Format Painter</span>
<span class="t" style="left:46.20px;top:142.30px;font-size:11.8px;color:#444;transform:scaleX(1.0145);">Clipboard</span>
<svg style="left:150px;top:143px;" width="8.5" height="8.5" viewBox="0 0 8.5 8.5"><path d="M0.5 6.9 V0.5 H7" fill="none" stroke="#3b3a39" stroke-width="1"/><path d="M2.8 3.3 L7.3 7.5 M7.4 3.2 V7.4 H3.2" fill="none" stroke="#3b3a39" stroke-width="1.05"/></svg>
<div style="left:170px;top:71px;width:123px;height:23px;background:#fff;border:1px solid #c4c2c0;"></div>
<div style="left:295px;top:71px;width:43px;height:23px;background:#fff;border:1px solid #c4c2c0;"></div>
<span class="t" style="left:173.19px;top:77.20px;font-size:12.4px;color:#252423;transform:scaleX(0.9784);">Calibri</span>
<span class="t" style="left:298.12px;top:77.20px;font-size:12.4px;color:#252423;transform:scaleX(0.9029);">11</span>
<svg style="left:282.8px;top:80.9px;" width="7" height="4.6" viewBox="0 0 7 4.6"><path d="M0.9 0.9 L3.5 3.4 L6.1 0.9" stroke="#3b3a39" stroke-width="1.25" fill="none"/></svg>
<svg style="left:328.0px;top:80.9px;" width="7" height="4.6" viewBox="0 0 7 4.6"><path d="M0.9 0.9 L3.5 3.4 L6.1 0.9" stroke="#3b3a39" stroke-width="1.25" fill="none"/></svg>
<svg style="left:21.9px;top:121.2px;" width="7" height="4.6" viewBox="0 0 7 4.6"><path d="M0.9 0.9 L3.5 3.4 L6.1 0.9" stroke="#3b3a39" stroke-width="1.25" fill="none"/></svg>
<svg style="left:106.9px;top:96.2px;" width="7" height="4.6" viewBox="0 0 7 4.6"><path d="M0.9 0.9 L3.5 3.4 L6.1 0.9" stroke="#3b3a39" stroke-width="1.25" fill="none"/></svg>
<svg style="left:175.9px;top:9.6px;" width="7" height="4.6" viewBox="0 0 7 4.6"><path d="M0.9 0.9 L3.5 3.4 L6.1 0.9" stroke="#fff" stroke-width="1.4" fill="none"/></svg>
<svg style="left:214.8px;top:9.6px;" width="7" height="4.6" viewBox="0 0 7 4.6"><path d="M0.9 0.9 L3.5 3.4 L6.1 0.9" stroke="#5c9b7b" stroke-width="1.4" fill="none"/></svg>
<span class="t" style="left:344.20px;top:72.95px;font-size:17.3px;color:#323130;transform:scaleX(0.9318);">A</span>
<svg style="left:354px;top:74px;" width="6" height="5" viewBox="0 0 6 5"><path d="M0.8 4 L3 1.4 L5.2 4" stroke="#2b88d8" stroke-width="1.2" fill="none"/></svg>
<span class="t" style="left:369.60px;top:76.20px;font-size:13.6px;color:#323130;transform:scaleX(0.9767);">A</span>
<svg style="left:377.5px;top:74.5px;" width="6" height="5" viewBox="0 0 6 5"><path d="M0.8 1 L3 3.6 L5.2 1" stroke="#2b88d8" stroke-width="1.2" fill="none"/></svg>
<span class="t" style="left:176.99px;top:107.40px;font-size:13px;color:#323130;font-weight:bold;transform:scaleX(0.9057);">B</span>
<span class="t" style="left:201.8px;top:106.9px;font-size:14.4px;color:#323130;font-family:'Liberation Serif',serif;font-style:italic;">I</span>
<span class="t" style="left:223.65px;top:107.40px;font-size:12.4px;color:#323130;transform:scaleX(1.0984);">U</span>
<div style="left:224px;top:118.5px;width:9.5px;height:1.2px;background:#323130;"></div>
<svg style="left:243.0px;top:112.1px;" width="7" height="4.6" viewBox="0 0 7 4.6"><path d="M0.9 0.9 L3.5 3.4 L6.1 0.9" stroke="#3b3a39" stroke-width="1.25" fill="none"/></svg>
<div style="left:259px;top:104px;width:1px;height:21px;background:#c8c6c4;"></div>
<svg style="left:266px;top:105px;" width="18" height="17" viewBox="0 0 18 17"><rect x="1" y="1" width="15" height="13" fill="#fbfbfa"/><rect x="1" y="1" width="1" height="1" fill="#3b3a39"/><rect x="3" y="1" width="1" height="1" fill="#3b3a39"/><rect x="5" y="1" width="1" height="1" fill="#3b3a39"/><rect x="7" y="1" width="1" height="1" fill="#3b3a39"/><rect x="9" y="1" width="1" height="1" fill="#3b3a39"/><rect x="11" y="1" width="1" height="1" fill="#3b3a39"/><rect x="13" y="1" width="1" height="1" fill="#3b3a39"/><rect x="15" y="1" width="1" height="1" fill="#3b3a39"/><rect x="1" y="3" width="1" height="1" fill="#3b3a39"/><rect x="15" y="3" width="1" height="1" fill="#3b3a39"/><rect x="1" y="5" width="1" height="1" fill="#3b3a39"/><rect x="15" y="5" width="1" height="1" fill="#3b3a39"/><rect x="1" y="7" width="1" height="1" fill="#3b3a39"/><rect x="15" y="7" width="1" height="1" fill="#3b3a39"/><rect x="1" y="9" width="1" height="1" fill="#3b3a39"/><rect x="15" y="9" width="1" height="1" fill="#3b3a39"/><rect x="1" y="11" width="1" height="1" fill="#3b3a39"/><rect x="15" y="11" width="1" height="1" fill="#3b3a39"/><rect x="1" y="13" width="1" height="1" fill="#3b3a39"/><rect x="15" y="13" width="1" height="1" fill="#3b3a39"/><rect x="3" y="8" width="1" height="1" fill="#3b3a39"/><rect x="5" y="8" width="1" height="1" fill="#3b3a39"/><rect x="11" y="8" width="1" height="1" fill="#3b3a39"/><rect x="13" y="8" width="1" height="1" fill="#3b3a39"/><rect x="8" y="3" width="1" height="1" fill="#3b3a39"/><rect x="8" y="5" width="1" height="1" fill="#3b3a39"/><rect x="8" y="11" width="1" height="1" fill="#3b3a39"/><rect x="8" y="13" width="1" height="1" fill="#3b3a39"/><path d="M8.5 6.6 L10.4 8.5 L8.5 10.4 L6.6 8.5 Z" fill="none" stroke="#3b3a39" stroke-width="0.9"/><rect x="1" y="14.9" width="15" height="1.3" fill="#111"/></svg>
<svg style="left:289.0px;top:112.0px;" width="7" height="4.6" viewBox="0 0 7 4.6"><path d="M0.9 0.9 L3.5 3.4 L6.1 0.9" stroke="#3b3a39" stroke-width="1.25" fill="none"/></svg>
<div style="left:305px;top:104px;width:1px;height:21px;background:#c8c6c4;"></div>
<svg style="left:312px;top:105px;" width="18" height="18" viewBox="0 0 18 18"><path d="M3.5 7.5 L8.7 2.2 L13.7 6.3 L8.2 12 Z" fill="#fbfbfa" stroke="#3b3a39" stroke-width="1.1" stroke-linejoin="round"/><path d="M8.5 2.6 V2 C8.5 0.8 10.7 0.8 10.7 2 V6.9" fill="none" stroke="#3b3a39" stroke-width="1.1"/><path d="M12.9 4.9 C14.9 5.8 15.6 7.8 15.1 10.3" fill="none" stroke="#1e74c8" stroke-width="1.9"/><rect x="1" y="13" width="16" height="4" fill="#ffff00"/></svg>
<svg style="left:334.7px;top:112.0px;" width="7" height="4.6" viewBox="0 0 7 4.6"><path d="M0.9 0.9 L3.5 3.4 L6.1 0.9" stroke="#3b3a39" stroke-width="1.25" fill="none"/></svg>
<span class="t" style="left:355.20px;top:104.80px;font-size:14.6px;color:#323130;">A</span>
<div style="left:352px;top:118px;width:16px;height:4px;background:#f00000;"></div>
<svg style="left:373.8px;top:112.0px;" width="7" height="4.6" viewBox="0 0 7 4.6"><path d="M0.9 0.9 L3.5 3.4 L6.1 0.9" stroke="#3b3a39" stroke-width="1.25" fill="none"/></svg>
<span class="t" style="left:257.83px;top:142.30px;font-size:11.8px;color:#444;transform:scaleX(1.0294);">Font</span>
<svg style="left:381.5px;top:143px;" width="8.5" height="8.5" viewBox="0 0 8.5 8.5"><path d="M0.5 6.9 V0.5 H7" fill="none" stroke="#3b3a39" stroke-width="1"/><path d="M2.8 3.3 L7.3 7.5 M7.4 3.2 V7.4 H3.2" fill="none" stroke="#3b3a39" stroke-width="1.05"/></svg>
<div style="left:406px;top:74px;width:14px;height:1.2px;background:#3b3a39;"></div>
<div style="left:409px;top:78px;width:8.5px;height:1.2px;background:#3b3a39;"></div>
<div style="left:406px;top:82px;width:14px;height:1.2px;background:#3b3a39;"></div>
<div style="left:430px;top:77px;width:14px;height:1.2px;background:#3b3a39;"></div>
<div style="left:433px;top:81px;width:8.5px;height:1.2px;background:#3b3a39;"></div>
<div style="left:430px;top:85px;width:14px;height:1.2px;background:#3b3a39;"></div>
<div style="left:450px;top:71px;width:22px;height:23px;background:#c8c6c4;border:1px solid #979593;"></div>
<div style="left:454px;top:81px;width:14px;height:1.2px;background:#3b3a39;"></div>
<div style="left:457px;top:85px;width:8.5px;height:1.2px;background:#3b3a39;"></div>
<div style="left:454px;top:89px;width:14px;height:1.2px;background:#3b3a39;"></div>
<div style="left:476px;top:72px;width:1px;height:21px;background:#c8c6c4;"></div>
<svg style="left:482px;top:71px;" width="21" height="20" viewBox="0 0 21 20"><text x="0" y="0" font-family="Liberation Sans" font-size="10.4" fill="#3b3a39" transform="translate(4.6,13.4) rotate(-45)">ab</text><path d="M7.1 17.6 L18 7.2" stroke="#2b88d8" stroke-width="1.25" fill="none"/><path d="M12.6 7 H18.2 V12.6" stroke="#2b88d8" stroke-width="1.25" fill="none"/></svg>
<svg style="left:504.1px;top:80.2px;" width="7" height="4.6" viewBox="0 0 7 4.6"><path d="M0.9 0.9 L3.5 3.4 L6.1 0.9" stroke="#3b3a39" stroke-width="1.25" fill="none"/></svg>
<div style="left:531px;top:69px;width:1px;height:59px;background:#c8c6c4;"></div>
<div style="left:406px;top:107px;width:14px;height:1.2px;background:#3b3a39;"></div>
<div style="left:406px;top:111px;width:9.5px;height:1.2px;background:#3b3a39;"></div>
<div style="left:406px;top:115px;width:14px;height:1.2px;background:#3b3a39;"></div>
<div style="left:406px;top:119px;width:9.5px;height:1.2px;background:#3b3a39;"></div>
<div style="left:430px;top:107px;width:14px;height:1.2px;background:#3b3a39;"></div>
<div style="left:432.5px;top:111px;width:9.0px;height:1.2px;background:#3b3a39;"></div>
<div style="left:430px;top:115px;width:14px;height:1.2px;background:#3b3a39;"></div>
<div style="left:432.5px;top:119px;width:9.0px;height:1.2px;background:#3b3a39;"></div>
<div style="left:454px;top:107px;width:14px;height:1.2px;background:#3b3a39;"></div>
<div style="left:458.5px;top:111px;width:9.5px;height:1.2px;background:#3b3a39;"></div>
<div style="left:454px;top:115px;width:14px;height:1.2px;background:#3b3a39;"></div>
<div style="left:458.5px;top:119px;width:9.5px;height:1.2px;background:#3b3a39;"></div>
<div style="left:476px;top:104px;width:1px;height:21px;background:#c8c6c4;"></div>
<div style="left:485px;top:107px;width:14px;height:1.2px;background:#3b3a39;"></div>
<div style="left:493px;top:111px;width:6px;height:1.2px;background:#3b3a39;"></div>
<div style="left:493px;top:115px;width:6px;height:1.2px;background:#3b3a39;"></div>
<div style="left:485px;top:119px;width:14px;height:1.2px;background:#3b3a39;"></div>
<svg style="left:484px;top:109.5px;" width="8" height="8" viewBox="0 0 8 8"><path d="M7 4 H1.2 M3.8 1.4 L1.2 4 L3.8 6.6" stroke="#2b88d8" stroke-width="1.15" fill="none"/></svg>
<div style="left:509px;top:107px;width:14px;height:1.2px;background:#3b3a39;"></div>
<div style="left:517px;top:111px;width:6px;height:1.2px;background:#3b3a39;"></div>
<div style="left:517px;top:115px;width:6px;height:1.2px;background:#3b3a39;"></div>
<div style="left:509px;top:119px;width:14px;height:1.2px;background:#3b3a39;"></div>
<svg style="left:508.5px;top:109.5px;" width="8" height="8" viewBox="0 0 8 8"><path d="M1 4 H6.8 M4.2 1.4 L6.8 4 L4.2 6.6" stroke="#2b88d8" stroke-width="1.15" fill="none"/></svg>
<span class="t" style="left:541.35px;top:73.80px;font-size:10.2px;color:#323130;transform:scaleX(1.0935);">ab</span>
<span class="t" style="left:541.33px;top:81.10px;font-size:10.2px;color:#323130;transform:scaleX(1.1400);">c</span>
<svg style="left:546.3px;top:80.6px;" width="10" height="9" viewBox="0 0 10 9"><path d="M5.2 1.4 H6.4 C9.4 1.4 9.4 6 6.4 6 H1.6" stroke="#2b88d8" stroke-width="1.2" fill="none"/><path d="M3.8 3.6 L1.4 6 L3.8 8.4" stroke="#2b88d8" stroke-width="1.2" fill="none"/></svg>
<span class="t" style="left:558.00px;top:77.35px;font-size:12.3px;color:#323130;transform:scaleX(0.9479);">Wrap Text</span>
<svg style="left:538px;top:106px;" width="17" height="16" viewBox="0 0 17 16"><rect x="1.5" y="1" width="14" height="13.6" fill="none" stroke="#b5b3b1" stroke-width="1.1"/><path d="M1.5 4.4 H15.5 M1.5 11.2 H15.5 M8.5 1 V4.4 M8.5 11.2 V14.6" stroke="#b5b3b1" stroke-width="1.1" fill="none"/><path d="M4 7.8 H13 M5.8 6 L4 7.8 L5.8 9.6 M11.2 6 L13 7.8 L11.2 9.6" stroke="#b5b3b1" stroke-width="1" fill="none"/></svg>
<span class="t" style="left:557.53px;top:108.85px;font-size:12.3px;color:#a8a6a4;transform:scaleX(0.9856);">Merge &amp; Center</span>
<svg style="left:653.0px;top:112.3px;" width="7" height="4.6" viewBox="0 0 7 4.6"><path d="M0.9 0.9 L3.5 3.4 L6.1 0.9" stroke="#b5b3b1" stroke-width="1.25" fill="none"/></svg>
<span class="t" style="left:499.60px;top:142.30px;font-size:11.8px;color:#444;transform:scaleX(0.9963);">Alignment</span>
<svg style="left:661.5px;top:143px;" width="8.5" height="8.5" viewBox="0 0 8.5 8.5"><path d="M0.5 6.9 V0.5 H7" fill="none" stroke="#3b3a39" stroke-width="1"/><path d="M2.8 3.3 L7.3 7.5 M7.4 3.2 V7.4 H3.2" fill="none" stroke="#3b3a39" stroke-width="1.05"/></svg>
<div style="left:682px;top:71px;width:125px;height:23px;background:#fff;border:1px solid #c4c2c0;"></div>
<span class="t" style="left:685.02px;top:77.30px;font-size:12.4px;color:#252423;transform:scaleX(0.9929);">Number</span>
<svg style="left:684px;top:108px;" width="19" height="15" viewBox="0 0 19 15"><rect x="1.1" y="1.1" width="14.8" height="9.6" fill="none" stroke="#323130" stroke-width="1.25"/><path d="M6.4 3.6 C3.6 3.4 3.6 8.2 6.4 8 M9.8 3.6 C7.6 3.8 7.6 7.8 9.8 8 M11.6 3.6 H13.2" stroke="#323130" stroke-width="1.1" fill="none"/><path d="M9.6 6.4 V12.4 C9.6 14.4 16.9 14.4 16.9 12.4 V6.4" fill="#faf9f8" stroke="#dc7412" stroke-width="1.25"/><ellipse cx="13.25" cy="6.4" rx="3.65" ry="1.5" fill="#faf9f8" stroke="#dc7412" stroke-width="1.25"/><path d="M9.6 9.4 C9.6 11.3 16.9 11.3 16.9 9.4" fill="none" stroke="#dc7412" stroke-width="1.15"/></svg>
<svg style="left:707.1px;top:112.3px;" width="7" height="4.6" viewBox="0 0 7 4.6"><path d="M0.9 0.9 L3.5 3.4 L6.1 0.9" stroke="#3b3a39" stroke-width="1.25" fill="none"/></svg>
<span class="t" style="left:724.07px;top:105.10px;font-size:19.4px;color:#323130;transform:scaleX(0.9129);">%</span>
<svg style="left:751px;top:106px;" width="12" height="16" viewBox="0 0 12 16"><path d="M6 2.2 C8.4 2.2 9.8 3.9 9.8 6.5 C9.8 10.1 7.4 13.4 3.2 15.3 L2.5 14.1 C4.9 12.7 6.1 11 6.3 9.2 C4.2 9.2 2.7 7.8 2.7 5.6 C2.7 3.6 4.1 2.2 6 2.2 Z" fill="#323130"/></svg>
<div style="left:771px;top:104px;width:1px;height:21px;background:#c8c6c4;"></div>
<svg style="left:778px;top:105px;" width="18" height="17" viewBox="0 0 18 17"><path d="M9.6 5.6 H1.6 M4.6 2.6 L1.6 5.6 L4.6 8.6" stroke="#2b88d8" stroke-width="1.3" fill="none"/></svg>
<span class="t" style="left:789.52px;top:105.45px;font-size:9.3px;color:#323130;transform:scaleX(1.0081);">0</span>
<span class="t" style="left:780.79px;top:112.95px;font-size:9.3px;color:#323130;transform:scaleX(1.0838);">.00</span>
<span class="t" style="left:722.88px;top:142.30px;font-size:11.8px;color:#444;transform:scaleX(0.9797);">Number</span>
<div style="left:2px;top:166px;width:102px;height:26px;background:#fff;border:1px solid #c6c6c6;"></div>
<span class="t" style="left:9.10px;top:174.45px;font-size:12.3px;color:#333;transform:scaleX(0.9784);">C2</span>
<svg style="left:90px;top:176px;" width="8" height="5" viewBox="0 0 8 5"><path d="M0.3 0.3 H7.3 L3.8 4.2 Z" fill="#777"/></svg>
<div style="left:118px;top:174px;width:2px;height:2px;background:#a3a3a3;"></div>
<div style="left:118px;top:178px;width:2px;height:2px;background:#a3a3a3;"></div>
<div style="left:118px;top:182px;width:2px;height:2px;background:#a3a3a3;"></div>
<div style="left:134px;top:166px;width:110px;height:26px;background:#fff;border:1px solid #c6c6c6;"></div>
<svg style="left:146px;top:173px;" width="14" height="13" viewBox="0 0 14 13"><path d="M1.5 1.4 L12.3 10.6 M12.3 1.4 L1.5 10.6" stroke="#b2b2b2" stroke-width="1.6" fill="none"/></svg>
<svg style="left:181px;top:173px;" width="17" height="13" viewBox="0 0 17 13"><path d="M2.5 6.6 L7 10.9 L14.8 1.3" stroke="#bcbcbc" stroke-width="2.1" fill="none"/></svg>
<span class="t" style="left:219.6px;top:170.3px;font-size:15.5px;color:#5a5a5a;font-family:'Liberation Serif',serif;font-style:italic;transform:scaleX(1.3);-webkit-text-stroke:0.25px #5a5a5a;">f</span>
<span class="t" style="left:224.6px;top:174.6px;font-size:11.5px;color:#5a5a5a;font-family:'Liberation Serif',serif;font-style:italic;font-weight:bold;transform:scaleX(1.25);">x</span>
<div style="left:247px;top:166px;width:560px;height:26px;background:#fff;border:1px solid #c6c6c6;"></div>
<span class="t" style="left:258.39px;top:173.60px;font-size:12.6px;color:#333;transform:scaleX(1.0081);">50.0742453804344</span>
<svg style="left:58px;top:1017px;" width="17" height="15" viewBox="0 0 17 15"><rect x="1" y="1.2" width="14" height="1.7" fill="#4a4a4a"/><path d="M1.5 1.5 V12.6 H7 M14.5 1.5 V5.5 M1.5 4.4 H14.5 M3.2 7 H6.2 M3.2 9.5 H5.6" fill="none" stroke="#4a4a4a" stroke-width="1"/><circle cx="10.6" cy="9.4" r="4" fill="#f3f3f3" stroke="#4a4a4a" stroke-width="1"/><circle cx="10.6" cy="9.4" r="1.6" fill="#4a4a4a"/></svg>
<svg style="left:90px;top:1016px;" width="17" height="17" viewBox="0 0 17 17"><circle cx="7.1" cy="2.8" r="1.7" fill="none" stroke="#4a4a4a" stroke-width="1"/><path d="M1.4 4.2 C3.6 6 10.6 6 12.8 4.2 M5.2 5.6 C5.4 9 4.6 12 3.8 14.6 M9 5.6 C9 7.4 9.2 8.4 9.6 9.4 M7.1 9.6 L5 14.6" stroke="#4a4a4a" stroke-width="1" fill="none"/><path d="M8.8 8.4 L14.9 14.5 M14.9 8.4 L8.8 14.5" stroke="#4a4a4a" stroke-width="1.1"/></svg>
</div></body></html>
